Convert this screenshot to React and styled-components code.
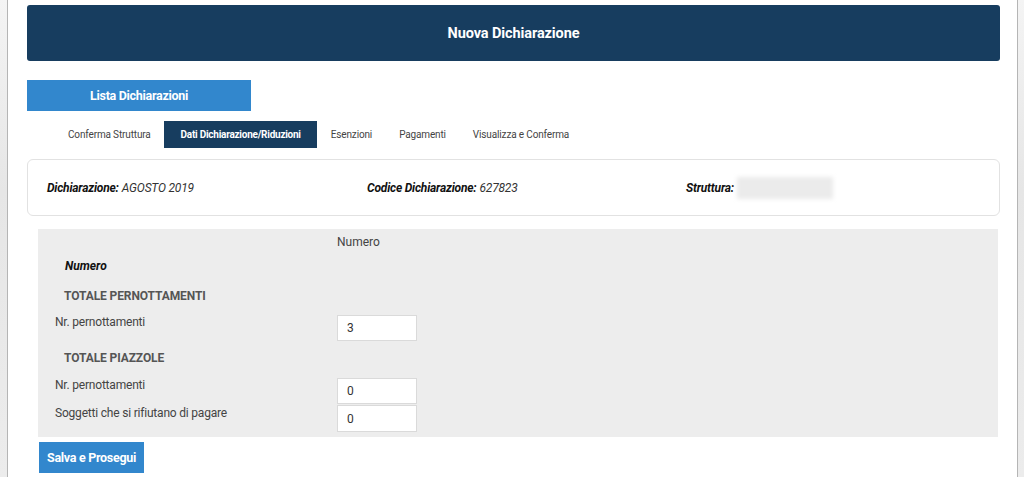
import React from 'react';
import styled, { createGlobalStyle } from 'styled-components';

const GlobalStyle = createGlobalStyle`
  html, body {
    margin: 0;
    padding: 0;
    background: #fff;
    font-family: Roboto, "Liberation Sans", sans-serif;
    color: #333;
  }
`;

const Frame = styled.div`
  display: flex;
  height: 477px;
`;

const Gutter = styled.div`
  width: ${(p) => p.w}px;
  background: linear-gradient(180deg, #f4f4f4 0%, #e6e6e6 40%, #ececec 100%);
  border-${(p) => p.side}: 1px solid #b5b5b5;
`;

const Main = styled.div`
  flex: 1;
  padding: 5px 17px 0 19px;
  display: flex;
  flex-direction: column;
`;

const Header = styled.div`
  height: 56px;
  background: #173d5f;
  border-radius: 3px;
  display: flex;
  align-items: center;
  justify-content: center;
  color: #fff;
  font-weight: 700;
  font-size: 14.5px;
  letter-spacing: -0.1px;
`;

const BlueButton = styled.button`
  background: #3287cd;
  color: #fff;
  border: none;
  font-family: inherit;
  font-weight: 700;
  font-size: ${(p) => p.size || 12}px;
  letter-spacing: -0.3px;
  width: ${(p) => p.w}px;
  height: ${(p) => p.h}px;
  padding: 0;
  cursor: pointer;
`;

const TopActions = styled.div`
  margin-top: 19px;
`;

const Tabs = styled.div`
  display: flex;
  align-items: center;
  margin-top: 10px;
  padding-left: 27.5px;
  height: 27px;
`;

const Tab = styled.div`
  height: 27px;
  display: flex;
  align-items: center;
  padding: 0 ${(p) => (p.active ? 16.5 : 13.5)}px;
  font-size: 10px;
  letter-spacing: ${(p) => (p.active ? -0.25 : -0.15)}px;
  color: ${(p) => (p.active ? '#fff' : '#444')};
  background: ${(p) => (p.active ? '#173d5f' : 'transparent')};
  font-weight: ${(p) => (p.active ? 700 : 400)};
`;

const InfoCard = styled.div`
  margin-top: 11px;
  height: 55px;
  border: 1px solid #e2e2e2;
  border-radius: 6px;
  display: grid;
  grid-template-columns: 320px 319px 1fr;
  align-items: center;
  padding-left: 19px;
  font-size: 12px;
  font-style: italic;
  color: #333;
  letter-spacing: -0.2px;
`;

const InfoItem = styled.div`
  display: flex;
  align-items: center;
  b {
    font-weight: 700;
    color: #111;
    margin-right: 3px;
  }
`;

const Blurred = styled.span`
  display: inline-block;
  width: 96px;
  height: 22px;
  background: #ebebeb;
  filter: blur(2px);
`;

const Panel = styled.div`
  margin: 13px 2px 0 11px;
  background: #ededed;
  padding: 5px 0 5px 17px;
  display: grid;
  grid-template-columns: 282px 80px;
  font-size: 12px;
  line-height: 16px;
`;

const ColHead = styled.div`
  color: #444;
  grid-column: 2;
  height: 16px;
`;

const BoldItalic = styled.div`
  grid-column: 1 / -1;
  font-weight: 700;
  font-style: italic;
  color: #111;
  padding-left: 10px;
  margin-top: 8px;
  height: 30px;
`;

const Section = styled.div`
  grid-column: 1 / -1;
  font-weight: 700;
  color: #555;
  padding-left: 9px;
  height: ${(p) => p.h}px;
  letter-spacing: -0.1px;
`;

const Label = styled.div`
  color: #444;
  height: ${(p) => p.h}px;
  letter-spacing: -0.2px;
`;

const NumInput = styled.input`
  box-sizing: border-box;
  width: 80px;
  height: ${(p) => p.h || 26}px;
  margin-top: ${(p) => p.mt || 0}px;
  border: 1px solid #dadada;
  background: #fff;
  font-family: inherit;
  font-size: 12px;
  color: #333;
  padding: 0 9px;
  outline: none;
`;

const Footer = styled.div`
  padding: 5px 0 0 12px;
`;

export default function App() {
  const tabs = [
    'Conferma Struttura',
    'Dati Dichiarazione/Riduzioni',
    'Esenzioni',
    'Pagamenti',
    'Visualizza e Conferma',
  ];

  return (
    <>
      <GlobalStyle />
      <Frame>
        <Gutter w={7} side="right" />
        <Main>
          <Header>Nuova Dichiarazione</Header>
          <TopActions>
            <BlueButton w={224} h={31} size={12.5}>Lista Dichiarazioni</BlueButton>
          </TopActions>
          <Tabs>
            {tabs.map((t, i) => (
              <Tab key={t} active={i === 1}>{t}</Tab>
            ))}
          </Tabs>
          <InfoCard>
            <InfoItem><b>Dichiarazione:</b>AGOSTO 2019</InfoItem>
            <InfoItem><b>Codice Dichiarazione:</b>627823</InfoItem>
            <InfoItem><b>Struttura:</b><Blurred /></InfoItem>
          </InfoCard>
          <Panel>
            <ColHead>Numero</ColHead>
            <BoldItalic>Numero</BoldItalic>
            <Section h={26}>TOTALE PERNOTTAMENTI</Section>
            <Label h={36}>Nr. pernottamenti</Label>
            <NumInput defaultValue="3" mt={1} />
            <Section h={27}>TOTALE PIAZZOLE</Section>
            <Label h={28}>Nr. pernottamenti</Label>
            <NumInput defaultValue="0" mt={1} />
            <Label h={27}>Soggetti che si rifiutano di pagare</Label>
            <NumInput defaultValue="0" h={27} />
          </Panel>
          <Footer>
            <BlueButton w={105} h={31} size={12.5}>Salva e Prosegui</BlueButton>
          </Footer>
        </Main>
        <Gutter w={6} side="left" />
      </Frame>
    </>
  );
}
